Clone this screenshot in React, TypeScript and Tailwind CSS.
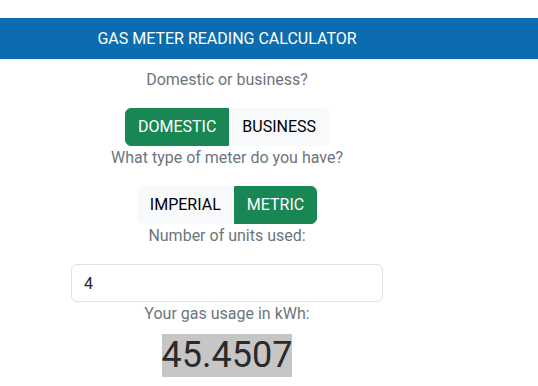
import React from "react";

export default function App() {
  return (
    <div
      className="min-h-[386px] bg-white pt-[18px]"
      style={{ fontFamily: "Roboto, 'Liberation Sans', sans-serif" }}
    >
      <header className="h-[41px] bg-[#0b6db0]">
        <div className="flex h-full w-[454px] items-center justify-center text-[16px] text-white">
          GAS METER READING CALCULATOR
        </div>
      </header>
      <main className="flex w-[454px] flex-col items-center pt-[9px] text-[16px]">
        <p className="mb-4 leading-6 text-[#6c757d]">Domestic or business?</p>
        <div className="flex">
          <button className="h-[38px] rounded-l-[6px] border border-[#198754] bg-[#198754] px-3 leading-6 text-white">
            DOMESTIC
          </button>
          <button className="h-[38px] rounded-r-[6px] border border-[#f8f9fa] bg-[#f8f9fa] px-3 leading-6 text-black">
            BUSINESS
          </button>
        </div>
        <p className="mb-4 leading-6 text-[#6c757d]">What type of meter do you have?</p>
        <div className="flex">
          <button className="h-[38px] rounded-l-[6px] border border-[#f8f9fa] bg-[#f8f9fa] px-3 leading-6 text-black">
            IMPERIAL
          </button>
          <button className="h-[38px] rounded-r-[6px] border border-[#198754] bg-[#198754] px-3 leading-6 text-white">
            METRIC
          </button>
        </div>
        <p className="mb-4 leading-6 text-[#6c757d]">Number of units used:</p>
        <input
          type="text"
          defaultValue="4"
          className="h-[38px] w-[312px] rounded-[6px] border border-[#dee2e6] bg-white px-3 leading-6 text-[#212529] outline-none"
        />
        <p className="mb-2 leading-6 text-[#6c757d]">Your gas usage in kWh:</p>
        <span className="inline-block bg-[#c6c6c6] text-[36px] leading-[43px] text-[#2a2a2a]">
          45.4507
        </span>
      </main>
    </div>
  );
}
